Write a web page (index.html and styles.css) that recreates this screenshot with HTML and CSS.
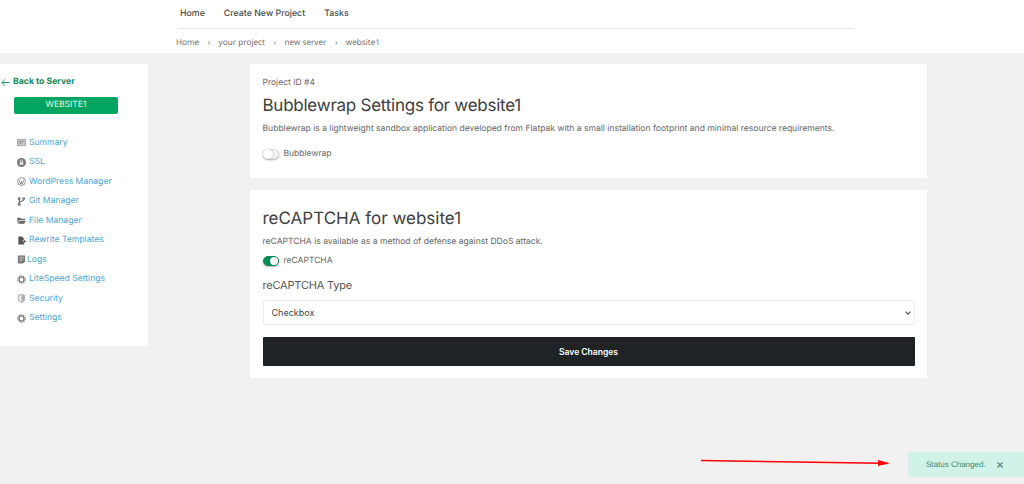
FILE: index.html
```html
<!DOCTYPE html>
<html lang="en">
<head>
    <meta charset="UTF-8">
    <meta name="viewport" content="width=device-width, initial-scale=1.0">
    <title>Bubblewrap Settings</title>
    <link rel="stylesheet" href="styles.css">
</head>
<body>
    <!-- Top Header -->
    <div class="top-header">
        <div class="navbar">
            <a href="#">Home</a>
            <a href="#">Create New Project</a>
            <a href="#">Tasks</a>
        </div>
        <div class="breadcrumb">
            <span>Home</span><span class="sep">&rsaquo;</span>
            <span>your project</span><span class="sep">&rsaquo;</span>
            <span>new server</span><span class="sep">&rsaquo;</span>
            <span>website1</span>
        </div>
    </div>

    <div class="layout">
        <!-- Sidebar -->
        <div class="sidebar">
            <a class="back-link" href="#">
                <svg class="back-arrow" viewBox="0 0 10 10"><path d="M9.5 5H1M4.500 1.500L1 5l3.500 3.500"/></svg>
                Back to Server
            </a>
            <div class="site-badge">WEBSITE1</div>
            <ul class="side-menu">
                <li><svg class="ico" viewBox="0 0 10 10"><path d="M.5 1.500h9v7h-9z" fill="#ccc" stroke="#888" stroke-width=".8"/><path d="M2 3.700h6M2 5.700h4" stroke="#777" stroke-width=".8" fill="none"/></svg><a href="#">Summary</a></li>
                <li><svg class="ico" viewBox="0 0 10 10"><circle cx="5" cy="5" r="5" fill="#777"/><rect x="3" y="4.200" width="4" height="3.500" fill="#ddd"/><path d="M3.800 4.200V3.200a1.200 1.200 0 0 1 2.400 0v1" stroke="#ddd" fill="none"/></svg><a href="#">SSL</a></li>
                <li><svg class="ico" viewBox="0 0 10 10"><circle cx="5" cy="5" r="4.400" fill="none" stroke="#888"/><path d="M2.500 3.500L4 8l1-3 1 3 1.500-4.500" stroke="#777" fill="none" stroke-width=".9"/></svg><a href="#">WordPress Manager</a></li>
                <li><svg class="ico" viewBox="0 0 10 10"><g fill="none" stroke="#666" stroke-width="1.200"><circle cx="2.500" cy="1.800" r="1"/><circle cx="2.500" cy="8.200" r="1"/><circle cx="7.500" cy="1.800" r="1"/><path d="M2.500 3v4M7.500 3c0 2-5 1.500-5 3"/></g></svg><a href="#">Git Manager</a></li>
                <li><svg class="ico" viewBox="0 0 10 10"><path d="M.5 2h3l1 1H9v1.500H2.500L.5 8.500zM3 5.200h6.800L8 8.500H1.200z" fill="#666"/></svg><a href="#">File Manager</a></li>
                <li><svg class="ico" viewBox="0 0 10 10"><path d="M1.500.500h4l2.500 2.500v6.500H1.500z" fill="#555"/><path d="M6 5.500h4M8 3.500v4" stroke="#fff"/><path d="M7 6h3M8.500 4.500v3" stroke="#555"/></svg><a href="#">Rewrite Templates</a></li>
                <li class="logs"><svg class="ico" viewBox="0 0 10 10"><path d="M1 .500h8v7L6.500 9.500H1z" fill="#777"/><path d="M2.500 2.500h5M2.500 4.500h5M2.500 6.500h3" stroke="#ddd" stroke-width=".8"/></svg><a href="#">Logs</a></li>
                <li><svg class="ico" viewBox="0 0 10 10"><circle cx="5" cy="5" r="2.800" fill="none" stroke="#777" stroke-width="1.400"/><circle cx="5" cy="5" r="4.200" fill="none" stroke="#888" stroke-width="1.200" stroke-dasharray="1.600 1.030"/></svg><a href="#">LiteSpeed Settings</a></li>
                <li><svg class="ico" viewBox="0 0 10 10"><path d="M5 .500L8.500 1.500V5c0 2.500-1.500 3.800-3.500 4.500C3 8.800 1.500 7.500 1.500 5V1.500z" fill="#eee" stroke="#888" stroke-width=".8"/><path d="M5 1v8c1.800-.7 3-2 3-4V1.800z" fill="#aaa"/></svg><a href="#">Security</a></li>
                <li><svg class="ico" viewBox="0 0 10 10"><circle cx="5" cy="5" r="2.800" fill="none" stroke="#777" stroke-width="1.400"/><circle cx="5" cy="5" r="4.200" fill="none" stroke="#888" stroke-width="1.200" stroke-dasharray="1.600 1.030"/></svg><a href="#">Settings</a></li>
            </ul>
        </div>

        <!-- Main content -->
        <div class="main">
            <div class="card card-bubblewrap">
                <div class="project-id">Project ID #4</div>
                <h2 class="card-title">Bubblewrap Settings for website1</h2>
                <p class="card-text">Bubblewrap is a lightweight sandbox application developed from Flatpak with a small installation footprint and minimal resource requirements.</p>
                <div class="switch-row switch-row-first">
                    <span class="switch"></span>
                    <span class="switch-label">Bubblewrap</span>
                </div>
            </div>
            <div class="card card-recaptcha">
                <h2 class="card-title">reCAPTCHA for website1</h2>
                <p class="card-text">reCAPTCHA is available as a method of defense against DDoS attack.</p>
                <div class="switch-row">
                    <span class="switch on"></span>
                    <span class="switch-label">reCAPTCHA</span>
                </div>
                <label class="field-label" for="captchaType">reCAPTCHA Type</label>
                <select id="captchaType" class="field-select">
                    <option>Checkbox</option>
                </select>
                <button class="save-btn">Save Changes</button>
            </div>
        </div>
    </div>

    <!-- Annotation arrow + toast, lie over the page -->
    <svg class="annotation" viewBox="0 0 190 10"><path d="M0 2.500L180 5.200" stroke="#f00" stroke-width="1.500" fill="none"/><path d="M177 2L189 5.300 177 8z" fill="#f00"/></svg>
    <div class="toast">
        <span class="toast-text">Status Changed.</span>
        <span class="toast-close">&times;</span>
    </div>
</body>
</html>
```

FILE: styles.css
```css
* {
    margin: 0;
    padding: 0;
    box-sizing: border-box;
}

html, body {
    height: 100%;
    overflow: hidden;
}

body {
    background-color: #f1f1f1;
    font-family: Inter, "Liberation Sans", sans-serif;
    color: #555;
    text-rendering: geometricPrecision;
}

/* Top header */
.top-header {
    background-color: #fff;
    height: 53px;
    padding-left: 178px;
}

.navbar {
    display: flex;
    gap: 19px;
    width: 676px;
    height: 29px;
    padding: 8px 0 0 2px;
    border-bottom: 1px solid #e4e4e4;
}

.navbar a {
    color: #4a4a4a;
    font-size: 8.800px;
    font-weight: 500;
    line-height: 12px;
    text-decoration: none;
}

.breadcrumb {
    display: flex;
    align-items: center;
    margin-left: -2px;
    height: 24px;
    padding-top: 2px;
    font-family: "Open Sans", sans-serif;
    font-size: 8.200px;
    color: #666;
}

.breadcrumb .sep {
    margin: 0 8.500px;
}

/* Layout */
.layout {
    display: flex;
    padding-top: 11px;
}

.sidebar {
    width: 148px;
    height: 282px;
    background-color: #fff;
    padding-top: 12px;
}

.back-link {
    display: flex;
    align-items: center;
    gap: 3px;
    padding-left: 1px;
    color: #14875a;
    font-size: 8.700px;
    font-weight: 700;
    line-height: 12px;
    text-decoration: none;
}

.back-arrow {
    width: 9px;
    height: 9px;
    fill: none;
    stroke: #14875a;
}

.site-badge {
    width: 104px;
    height: 17px;
    margin: 9px 0 0 14px;
    background-color: #02a55f;
    border-radius: 2px;
    color: #e4f7ee;
    font-size: 8.500px;
    line-height: 17px;
    text-align: center;
}

.side-menu {
    list-style: none;
    margin-top: 19px;
    padding-left: 17px;
}

.side-menu li {
    display: flex;
    align-items: center;
    gap: 3px;
    height: 19.500px;
}

.side-menu li.logs {
    gap: 1px;
}

.side-menu a {
    color: #4ea5cf;
    font-size: 8.600px;
    text-decoration: none;
}

.ico {
    width: 9px;
    height: 9px;
    flex-shrink: 0;
}

.main {
    width: 677px;
    margin-left: 102px;
}

.card {
    background-color: #fff;
    padding: 0 12.500px;
}

.card-bubblewrap {
    height: 114px;
    padding-top: 13px;
}

.card-bubblewrap .card-title {
    letter-spacing: -0.25px;
}

.card-recaptcha {
    height: 188px;
    margin-top: 12px;
    padding-top: 18px;
}

.project-id {
    font-size: 8.530px;
    line-height: 12px;
    color: #666;
}

.card-title {
    margin-top: 6px;
    font-size: 17px;
    font-weight: 400;
    line-height: 22px;
    color: #404040;
}

.card-recaptcha .card-title {
    margin-top: 0;
}

.card-text {
    margin-top: 6px;
    font-size: 8.550px;
    line-height: 12px;
    color: #666;
}

.switch-row {
    display: flex;
    align-items: center;
    gap: 5px;
    margin-top: 7px;
}

.switch-row-first {
    margin-top: 13px;
}

.switch {
    position: relative;
    width: 16px;
    height: 10px;
    border-radius: 5px;
    background-color: #f4f4f4;
    border: 1px solid #ddd;
    box-shadow: 0 1px 2px rgba(0, 0, 0, 0.3);
}

.switch::after {
    content: "";
    position: absolute;
    top: -1px;
    left: -1px;
    width: 10px;
    height: 10px;
    border-radius: 50%;
    background-color: #fff;
    box-shadow: 0 0 2px rgba(0, 0, 0, 0.3);
}

.switch.on {
    background-color: #058c57;
    border-color: #058c57;
}

.switch.on::after {
    top: 0;
    left: 6px;
    width: 8px;
    height: 8px;
}

.switch-label {
    font-size: 8.530px;
    line-height: 12px;
    color: #666;
}

.field-label {
    display: block;
    margin-top: 10px;
    font-size: 11px;
    letter-spacing: -0.2px;
    line-height: 16px;
    color: #555;
}

.field-select {
    display: block;
    width: 100%;
    height: 25px;
    margin-top: 7px;
    padding-left: 8px;
    appearance: none;
    background: #fff url("data:image/svg+xml,%3Csvg xmlns='http://www.w3.org/2000/svg' viewBox='0 0 6 4'%3E%3Cpath d='M.5.700L3 3.200 5.500.700' fill='none' stroke='%23555' stroke-width='1.200'/%3E%3C/svg%3E") no-repeat right 3px center / 6px 4px;
    border: 1px solid #eee;
    border-radius: 2px;
    color: #444;
    font-family: Inter, "Liberation Sans", sans-serif;
    font-size: 9px;
}

.save-btn {
    display: block;
    width: 100%;
    height: 29px;
    margin-top: 12px;
    background-color: #1f2326;
    border: 0;
    border-radius: 1px;
    color: #fff;
    font-family: Inter, "Liberation Sans", sans-serif;
    font-size: 8.530px;
    font-weight: 600;
}

/* Overlays */
.annotation {
    position: absolute;
    left: 701px;
    top: 457.500px;
    width: 190px;
    height: 10px;
}

.toast {
    position: absolute;
    left: 908px;
    top: 452px;
    width: 116px;
    height: 25px;
    display: flex;
    align-items: center;
    background-color: #d0f2e9;
    color: #3b8a6b;
    font-family: "Liberation Sans", sans-serif;
    font-size: 8px;
    padding-left: 18px;
}

.toast-close {
    margin-left: 11px;
    font-size: 12px;
    font-weight: 700;
    color: #6a8f85;
}
```
